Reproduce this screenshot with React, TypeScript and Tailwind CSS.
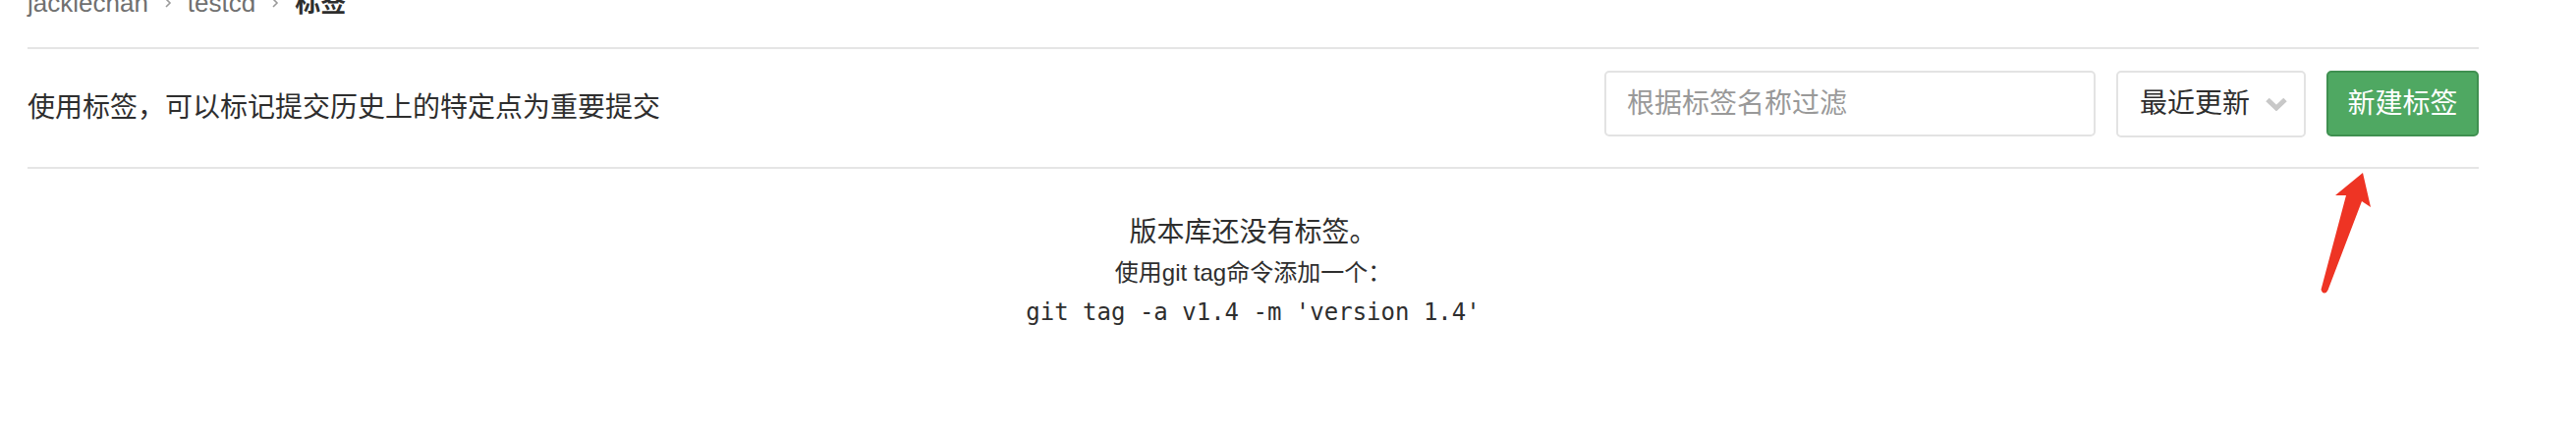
import { useState } from 'react';

const Crumb = () => (
  <svg width="8" height="12" viewBox="0 0 8 12" className="mx-[16px] shrink-0">
    <path d="M2 2 L6 6 L2 10" stroke="#9a9a9a" strokeWidth="1.6" fill="none" />
  </svg>
);

const App = () => {
  const [query, setQuery] = useState('');

  return (
    <div className="relative min-h-screen bg-white font-['Liberation_Sans','Noto_Sans_CJK_SC',sans-serif] text-[#2e2e2e]">
      <div className="ml-[28px] w-[2495px]">
        {/* breadcrumb, cut off by the top of the page */}
        <nav className="h-[48px] flex items-end pb-[32px]">
          <div className="flex items-center text-[26px] leading-[26px] text-[#707070]">
            <span>jackiechan</span>
            <Crumb />
            <span>testcd</span>
            <Crumb />
            <span className="font-bold text-[#2e2e2e]">标签</span>
          </div>
        </nav>

        {/* top controls */}
        <div className="flex justify-between border-y-2 border-[#e5e5e5] pt-[22px] pb-[30px]">
          <p className="mt-[18px] text-[28px] leading-[40px] text-[#2e2e2e]">
            使用标签，可以标记提交历史上的特定点为重要提交
          </p>
          <div className="flex gap-[21px]">
            <input
              value={query}
              onChange={(e) => setQuery(e.target.value)}
              placeholder="根据标签名称过滤"
              className="w-[500px] h-[67px] px-[21px] border-2 border-[#e3e3e3] rounded-[5px] text-[28px] outline-none placeholder:text-[#999]"
            />
            <button className="w-[193px] h-[68px] flex items-center justify-between pl-[22px] pr-[16px] border-2 border-[#e3e3e3] rounded-[5px] bg-white text-[28px] text-[#2e2e2e]">
              最近更新
              <svg width="24" height="14" viewBox="0 0 24 14">
                <path d="M3 2.5 L12 11 L21 2.5" stroke="#c8c8c8" strokeWidth="5" fill="none" />
              </svg>
            </button>
            <button className="w-[155px] h-[67px] border-2 border-[#3f9050] rounded-[5px] bg-[#4fa862] text-[28px] text-white">
              新建标签
            </button>
          </div>
        </div>

        {/* empty state */}
        <div className="text-center">
          <h4 className="mt-[45px] text-[28px] leading-[40px] text-[#2e2e2e]">版本库还没有标签。</h4>
          <p className="mt-[1px] text-[24px] leading-[40px] text-[#2e2e2e]">使用git tag命令添加一个：</p>
          <pre className="font-['DejaVu_Sans_Mono',monospace] text-[24px] leading-[40px] text-[#2e2e2e]">
            git tag -a v1.4 -m 'version 1.4'
          </pre>
        </div>
      </div>

      {/* red annotation arrow */}
      <svg
        className="absolute left-[2355px] top-[170px]"
        width="65"
        height="135"
        viewBox="0 0 65 135"
      >
        <path
          d="M50 6 L22 29 L33 29 L7.5 125 Q9 129 11 128.5 Q13.5 128 14.5 125.5 L49 35 L58 41 Z"
          fill="#ee3424"
        />
      </svg>
    </div>
  );
};

export default App;
